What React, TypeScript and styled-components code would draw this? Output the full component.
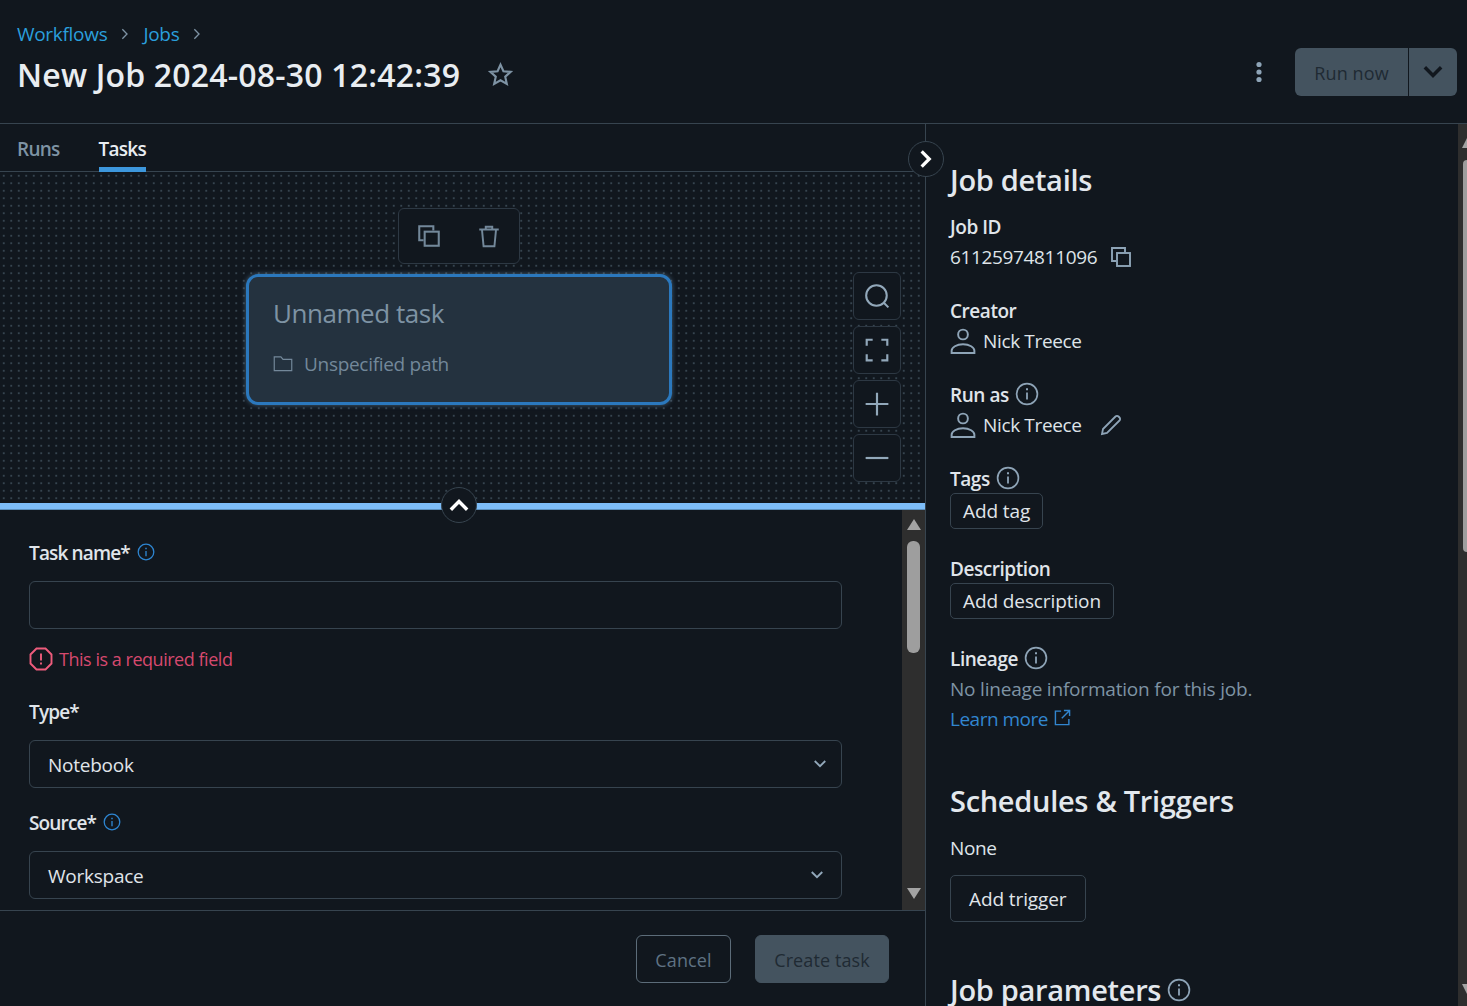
import React from 'react';
import styled, { createGlobalStyle } from 'styled-components';

const GlobalStyle = createGlobalStyle`
  html, body { margin: 0; padding: 0; background: #11171e; }
  body { font-family: "Open Sans", "Noto Sans", "Liberation Sans", sans-serif; color: #e8ecf0; }
  * { box-sizing: border-box; }
`;

const Page = styled.div`
  width: 1467px;
  height: 1006px;
  display: flex;
  flex-direction: column;
  overflow: hidden;
  background: #11171e;
`;

const Header = styled.header`
  height: 124px;
  flex: none;
  display: flex;
  justify-content: space-between;
  padding: 22px 10px 0 17px;
  border-bottom: 1px solid #37444f;
`;

const TitleBlock = styled.div`
  display: flex;
  flex-direction: column;
`;

const Crumbs = styled.nav`
  display: flex;
  align-items: center;
  height: 24px;
  font-size: 19px;
  letter-spacing: -0.3px;
`;

const CrumbLink = styled.span`
  color: #2a9fdc;
`;

const CrumbSep = styled.span`
  width: 36px;
  display: flex;
  justify-content: center;
  color: #7e93a4;
`;

const TitleRow = styled.div`
  display: flex;
  align-items: center;
  margin-top: 5px;
  height: 46px;
`;

const Title = styled.h1`
  margin: 0;
  font-size: 32px;
  font-weight: 600;
  letter-spacing: 0.2px;
  color: #e9edf1;
  white-space: nowrap;
`;

const StarSlot = styled.span`
  margin-left: 27px;
  display: flex;
  color: #7e93a4;
`;

const HeaderActions = styled.div`
  display: flex;
  align-items: center;
  height: 48px;
  margin-top: 26px;
`;

const KebabSlot = styled.span`
  display: flex;
  margin-right: 24px;
  color: #8ea4b7;
`;

const SplitButton = styled.div`
  display: flex;
  width: 162px;
  height: 48px;
  border-radius: 6px;
  background: #44535f;
  overflow: hidden;
`;

const SplitMain = styled.span`
  width: 114px;
  display: flex;
  align-items: center;
  justify-content: center;
  padding-top: 2px;
  font-size: 18px;
  letter-spacing: 0.1px;
  color: #1f2a33;
  border-right: 1px solid #11171e;
`;

const SplitCaret = styled.span`
  flex: 1;
  display: flex;
  align-items: center;
  justify-content: center;
  color: #11171e;
`;

const Body = styled.div`
  flex: 1;
  min-height: 0;
  display: flex;
`;

const LeftPane = styled.section`
  position: relative;
  width: 926px;
  flex: none;
  display: flex;
  flex-direction: column;
  border-right: 1px solid #37444f;
`;

const Tabs = styled.div`
  height: 48px;
  flex: none;
  display: flex;
  gap: 39px;
  padding-left: 17px;
  border-bottom: 1px solid #37444f;
`;

const Tab = styled.div<{ $active?: boolean }>`
  height: 48px;
  padding-top: 12px;
  font-size: 19px;
  font-weight: 600;
  letter-spacing: -0.75px;
  color: ${({ $active }) => ($active ? '#e9edf1' : '#7e93a4')};
  border-bottom: 5px solid ${({ $active }) => ($active ? '#3d97dc' : 'transparent')};
`;

const Canvas = styled.div`
  position: relative;
  height: 331px;
  flex: none;
  background-color: #11171e;
  background-image: radial-gradient(circle at center, #36444f 0.9px, transparent 1.1px);
  background-size: 7.5px 7.5px;
`;

const NodeToolbar = styled.div`
  position: absolute;
  left: 398px;
  top: 36px;
  width: 122px;
  height: 56px;
  display: flex;
  align-items: center;
  justify-content: space-around;
  border: 1px solid #2d3843;
  border-radius: 6px;
  background: #11171e;
  color: #73889a;
`;

const TaskNode = styled.div`
  position: absolute;
  left: 246px;
  top: 102px;
  width: 426px;
  height: 131px;
  padding: 19px 24px;
  border: 3px solid #2b78bd;
  border-radius: 12px;
  background: #24323f;
  box-shadow: 0 0 5px rgba(120, 170, 210, 0.5);
`;

const TaskName = styled.div`
  font-size: 26px;
  line-height: 34px;
  letter-spacing: -0.45px;
  color: #7e93a4;
`;

const TaskPath = styled.div`
  display: flex;
  align-items: center;
  gap: 11px;
  margin-top: 21px;
  font-size: 19px;
  line-height: 26px;
  letter-spacing: -0.3px;
  color: #73889a;
`;

const ZoomControls = styled.div`
  position: absolute;
  left: 853px;
  top: 100px;
  display: flex;
  flex-direction: column;
  gap: 6px;
`;

const ZoomButton = styled.div`
  width: 48px;
  height: 48px;
  display: flex;
  align-items: center;
  justify-content: center;
  border: 1px solid #2d3843;
  border-radius: 6px;
  background: #11171e;
  color: #92a8ba;
`;

const Splitter = styled.div`
  height: 7px;
  flex: none;
  background: #7dbdf8;
  border-bottom: 1px solid #5a8fbd;
`;

const RoundToggle = styled.div<{ $left: number; $top: number }>`
  position: absolute;
  left: ${({ $left }) => $left}px;
  top: ${({ $top }) => $top}px;
  width: 36px;
  height: 36px;
  display: flex;
  align-items: center;
  justify-content: center;
  border: 1px solid #37444f;
  border-radius: 50%;
  background: #11171e;
  color: #fff;
  z-index: 2;
`;

const FormArea = styled.div`
  flex: 1;
  min-height: 0;
  display: flex;
`;

const Form = styled.div`
  flex: 1;
  min-width: 0;
  padding: 30px 60px 0 29px;
  overflow: hidden;
`;

const LabelRow = styled.div`
  display: flex;
  align-items: center;
  gap: 7px;
  height: 26px;
  color: #e0e5ea;
  font-size: 19px;
  font-weight: 600;
  letter-spacing: -0.85px;
`;

const InfoBlue = styled.span`
  display: flex;
  color: #2e86d2;
  margin-top: -3px;
`;

const Input = styled.div`
  height: 48px;
  margin-top: 15px;
  border: 1px solid #37444f;
  border-radius: 6px;
`;

const ErrorRow = styled.div`
  display: flex;
  align-items: center;
  gap: 6px;
  height: 28px;
  margin-top: 16px;
  font-size: 18px;
  letter-spacing: -0.47px;
  color: #d6496e;
`;

const ErrorIcon = styled.span`
  display: flex;
  color: #ee5c7c;
`;

const Select = styled.div<{ $caretInset: number }>`
  height: 48px;
  margin-top: 15px;
  display: flex;
  align-items: center;
  justify-content: space-between;
  padding: 2px ${({ $caretInset }) => $caretInset}px 0 18px;
  border: 1px solid #37444f;
  border-radius: 6px;
  font-size: 19px;
  letter-spacing: -0.25px;
  color: #e0e5ea;
  svg { color: #92a8ba; margin-top: -2px; }
`;

const FieldGap = styled.div<{ $h: number }>`
  height: ${({ $h }) => $h}px;
`;

const Track = styled.div`
  width: 23px;
  flex: none;
  display: flex;
  flex-direction: column;
  align-items: center;
  background: #2e2e2e;
`;

const ArrowSlot = styled.div<{ $h: number }>`
  height: ${({ $h }) => $h}px;
  flex: none;
  display: flex;
  align-items: center;
  justify-content: center;
  color: #a3a3a3;
`;

const Thumb = styled.div`
  width: 13px;
  height: 112px;
  margin-top: 3px;
  border-radius: 6px;
  background: #9e9e9e;
`;

const TrackFill = styled.div`
  flex: 1;
`;

/* the page scrollbar is cut off by the window edge, only its left part shows */
const PageTrack = styled.div`
  width: 9px;
  flex: none;
  display: flex;
  flex-direction: column;
  padding: 14px 0 12px 4px;
  background: #2e2e2e;
  color: #a3a3a3;
  svg { flex: none; }
`;

const PageThumb = styled.div`
  width: 4px;
  height: 392px;
  margin: 12px 0 0 1px;
  border-radius: 5px 0 0 5px;
  background: #9e9e9e;
`;

const Footer = styled.div`
  height: 96px;
  flex: none;
  display: flex;
  justify-content: flex-end;
  gap: 24px;
  padding: 24px 36px 0 0;
  border-top: 1px solid #37444f;
`;

const FooterButton = styled.div<{ $primary?: boolean; $width: number }>`
  width: ${({ $width }) => $width}px;
  height: 48px;
  display: flex;
  align-items: center;
  justify-content: center;
  padding-top: 2px;
  border-radius: 6px;
  font-size: 18px;
  letter-spacing: 0.1px;
  border: 1px solid ${({ $primary }) => ($primary ? '#44535f' : '#5c6c79')};
  background: ${({ $primary }) => ($primary ? '#44535f' : 'transparent')};
  color: ${({ $primary }) => ($primary ? '#1f2a33' : '#5f7283')};
`;

const RightPane = styled.aside`
  flex: 1;
  min-width: 0;
  display: flex;
`;

const Details = styled.div`
  flex: 1;
  min-width: 0;
  padding: 36px 0 0 24px;
  overflow: hidden;
`;

const SectionTitle = styled.h2<{ $top?: number }>`
  display: flex;
  align-items: center;
  gap: 6px;
  margin: ${({ $top }) => $top ?? 0}px 0 0;
  font-size: 29px;
  line-height: 40px;
  font-weight: 600;
  letter-spacing: -0.3px;
  color: #e3e8ed;
  white-space: nowrap;
`;

const InfoGrey = styled.span<{ $shift?: number }>`
  display: flex;
  color: #8ea4b7;
  margin-top: ${({ $shift }) => $shift ?? 0}px;
`;

const DetailLabel = styled.div<{ $top?: number }>`
  display: flex;
  align-items: center;
  gap: 6px;
  height: 26px;
  margin-top: ${({ $top }) => $top ?? 0}px;
  font-size: 19px;
  font-weight: 600;
  letter-spacing: -0.45px;
  color: #e0e5ea;
`;

const DetailValue = styled.div`
  display: flex;
  align-items: center;
  height: 30px;
  margin-top: 2px;
  font-size: 19px;
  letter-spacing: -0.35px;
  color: #dfe4e9;
`;

const IconSlot = styled.span<{ $left?: number; $right?: number }>`
  display: flex;
  color: #8ea4b7;
  margin-left: ${({ $left }) => $left ?? 0}px;
  margin-right: ${({ $right }) => $right ?? 0}px;
`;

const GhostButton = styled.div<{ $tall?: boolean }>`
  display: inline-flex;
  align-items: center;
  height: ${({ $tall }) => ($tall ? 47 : 36)}px;
  padding: 0 ${({ $tall }) => ($tall ? 18 : 12)}px;
  border: 1px solid #37444f;
  border-radius: 5px;
  font-size: 19px;
  letter-spacing: -0.1px;
  color: #e0e5ea;
`;

const MutedLine = styled.div`
  height: 30px;
  margin-top: 2px;
  display: flex;
  align-items: center;
  font-size: 19px;
  letter-spacing: -0.2px;
  color: #7e93a4;
`;

const LearnLine = styled.div`
  height: 30px;
  display: flex;
  align-items: center;
  gap: 6px;
  font-size: 19px;
  letter-spacing: -0.5px;
  color: #3286d0;
  svg { margin-top: -4px; }
`;

const ButtonRow = styled.div`
  margin-top: 1px;
`;

const Icon = ({ size, children, sw = 1.5 }: { size: number; children: React.ReactNode; sw?: number }) => (
  <svg width={size} height={size} viewBox="0 0 24 24" fill="none" stroke="currentColor" strokeWidth={sw}>
    {children}
  </svg>
);

const Info = ({ size }: { size: number }) => (
  <Icon size={size} sw={1.7}>
    <circle cx="12" cy="12" r="10.4" />
    <path d="M12 10.5v7" strokeWidth="1.8" />
    <path d="M12 6.200v2" strokeWidth="2" />
  </Icon>
);

const Copy = ({ size }: { size: number }) => (
  <Icon size={size} sw={1.9}>
    <path d="M7 16H3V3h13v4" />
    <rect x="8" y="8" width="13" height="13" />
  </Icon>
);

const Person = () => (
  <Icon size={26} sw={1.8}>
    <circle cx="12" cy="6" r="4.500" />
    <path d="M1.500 23v-2c0-3 4.500-6 10.500-6s10.500 3 10.500 6v2z" />
  </Icon>
);

const Chevron = ({ size, dir, sw = 3 }: { size: number; dir: 'up' | 'down' | 'right'; sw?: number }) => {
  const d = dir === 'up' ? 'M5 16l7-7 7 7' : dir === 'down' ? 'M5 8l7 7 7-7' : 'M8 5l7 7-7 7';
  return (
    <Icon size={size} sw={sw}>
      <path d={d} />
    </Icon>
  );
};

export default function App() {
  return (
    <Page>
      <GlobalStyle />
      <Header>
        <TitleBlock>
          <Crumbs>
            <CrumbLink>Workflows</CrumbLink>
            <CrumbSep><Chevron size={16} dir="right" sw={2} /></CrumbSep>
            <CrumbLink>Jobs</CrumbLink>
            <CrumbSep><Chevron size={16} dir="right" sw={2} /></CrumbSep>
          </Crumbs>
          <TitleRow>
            <Title>New Job 2024-08-30 12:42:39</Title>
            <StarSlot>
              <Icon size={27} sw={1.9}>
                <path d="M12 3.200l2.600 5.900 6.400.6-4.800 4.300 1.400 6.300L12 17.100l-5.600 3.200 1.400-6.300L3 9.700l6.400-.6z" />
              </Icon>
            </StarSlot>
          </TitleRow>
        </TitleBlock>
        <HeaderActions>
          <KebabSlot>
            <svg width="24" height="24" viewBox="0 0 24 24" fill="currentColor">
              <circle cx="12" cy="4.500" r="2.600" />
              <circle cx="12" cy="12" r="2.600" />
              <circle cx="12" cy="19.500" r="2.600" />
            </svg>
          </KebabSlot>
          <SplitButton>
            <SplitMain>Run now</SplitMain>
            <SplitCaret><Chevron size={28} dir="down" /></SplitCaret>
          </SplitButton>
        </HeaderActions>
      </Header>
      <Body>
        <LeftPane>
          <RoundToggle $left={908} $top={17}><Chevron size={26} dir="right" /></RoundToggle>
          <RoundToggle $left={441} $top={363}><Chevron size={28} dir="up" /></RoundToggle>
          <Tabs>
            <Tab>Runs</Tab>
            <Tab $active>Tasks</Tab>
          </Tabs>
          <Canvas>
            <NodeToolbar>
              <Copy size={26} />
              <Icon size={26} sw={1.8}>
                <path d="M3 6h18M9 6V3.500h6V6M5.500 6l1.500 15.500h10L18.500 6" />
              </Icon>
            </NodeToolbar>
            <TaskNode>
              <TaskName>Unnamed task</TaskName>
              <TaskPath>
                <Icon size={20} sw={1.4}>
                  <path d="M1.500 20V3.500h8l2.500 3h10.500V20z" />
                </Icon>
                Unspecified path
              </TaskPath>
            </TaskNode>
            <ZoomControls>
              <ZoomButton>
                <Icon size={26} sw={1.9}>
                  <circle cx="11.500" cy="11.500" r="9.500" />
                  <path d="M18.500 18.500l4 4" />
                </Icon>
              </ZoomButton>
              <ZoomButton>
                <Icon size={26} sw={2}>
                  <path d="M2.500 8V2.500H8M16 2.500h5.500V8M2.500 16v5.500H8M16 21.500h5.500V16" />
                </Icon>
              </ZoomButton>
              <ZoomButton>
                <Icon size={26} sw={2}>
                  <path d="M12 1.500v21M1.500 12h21" />
                </Icon>
              </ZoomButton>
              <ZoomButton>
                <Icon size={26} sw={2}>
                  <path d="M1.500 12h21" />
                </Icon>
              </ZoomButton>
            </ZoomControls>
          </Canvas>
          <Splitter />
          <FormArea>
            <Form>
              <LabelRow>
                Task name*
                <InfoBlue><Info size={18} /></InfoBlue>
              </LabelRow>
              <Input />
              <ErrorRow>
                <ErrorIcon>
                  <Icon size={24} sw={1.9}>
                    <path d="M7.500 1.500h9l6 6v9l-6 6h-9l-6-6v-9z" />
                    <path d="M12 6.500v7M12 15.500v2" />
                  </Icon>
                </ErrorIcon>
                This is a required field
              </ErrorRow>
              <FieldGap $h={26} />
              <LabelRow>Type*</LabelRow>
              <Select $caretInset={12}>
                Notebook
                <Chevron size={18} dir="down" sw={2.5} />
              </Select>
              <FieldGap $h={22} />
              <LabelRow>
                Source*
                <InfoBlue><Info size={18} /></InfoBlue>
              </LabelRow>
              <Select $caretInset={15}>
                Workspace
                <Chevron size={18} dir="down" sw={2.5} />
              </Select>
            </Form>
            <Track>
              <ArrowSlot $h={28}>
                <svg width="14" height="11" viewBox="0 0 14 11" fill="currentColor"><path d="M7 0l7 11H0z" /></svg>
              </ArrowSlot>
              <Thumb />
              <TrackFill />
              <ArrowSlot $h={34}>
                <svg width="14" height="11" viewBox="0 0 14 11" fill="currentColor"><path d="M7 11l7-11H0z" /></svg>
              </ArrowSlot>
            </Track>
          </FormArea>
          <Footer>
            <FooterButton $width={95}>Cancel</FooterButton>
            <FooterButton $width={134} $primary>Create task</FooterButton>
          </Footer>
        </LeftPane>
        <RightPane>
          <Details>
            <SectionTitle>Job details</SectionTitle>
            <DetailLabel $top={14}>Job ID</DetailLabel>
            <DetailValue>
              61125974811096
              <IconSlot $left={12}><Copy size={24} /></IconSlot>
            </DetailValue>
            <DetailLabel $top={26}>Creator</DetailLabel>
            <DetailValue>
              <IconSlot $right={7}><Person /></IconSlot>
              Nick Treece
            </DetailValue>
            <DetailLabel $top={26}>
              Run as
              <InfoGrey $shift={-2}><Info size={24} /></InfoGrey>
            </DetailLabel>
            <DetailValue>
              <IconSlot $right={7}><Person /></IconSlot>
              Nick Treece
              <IconSlot $left={17}>
                <Icon size={24} sw={1.8}>
                  <path d="M3 21l1-5L16.500 3.500a2.100 2.100 0 0 1 3 0l1 1a2.100 2.100 0 0 1 0 3L8 20z" />
                </Icon>
              </IconSlot>
            </DetailValue>
            <DetailLabel $top={26}>
              Tags
              <InfoGrey $shift={-2}><Info size={24} /></InfoGrey>
            </DetailLabel>
            <ButtonRow><GhostButton>Add tag</GhostButton></ButtonRow>
            <DetailLabel $top={27}>Description</DetailLabel>
            <ButtonRow><GhostButton>Add description</GhostButton></ButtonRow>
            <DetailLabel $top={27}>
              Lineage
              <InfoGrey $shift={-2}><Info size={24} /></InfoGrey>
            </DetailLabel>
            <MutedLine>No lineage information for this job.</MutedLine>
            <LearnLine>
              Learn more
              <Icon size={17} sw={2}>
                <path d="M10 3H2v19h19v-8M14 2h8v8M22 2L11 13" />
              </Icon>
            </LearnLine>
            <SectionTitle $top={47}>Schedules &amp; Triggers</SectionTitle>
            <FieldGap $h={10} />
            <DetailValue>None</DetailValue>
            <ButtonRow><FieldGap $h={11} /><GhostButton $tall>Add trigger</GhostButton></ButtonRow>
            <SectionTitle $top={48}>
              Job parameters
              <InfoGrey><Info size={24} /></InfoGrey>
            </SectionTitle>
          </Details>
          <PageTrack>
            <svg width="5" height="10" viewBox="0 0 5 10" fill="currentColor"><path d="M5 0v10H0z" /></svg>
            <PageThumb />
            <TrackFill />
            <svg width="5" height="10" viewBox="0 0 5 10" fill="currentColor"><path d="M5 10V0H0z" /></svg>
          </PageTrack>
        </RightPane>
      </Body>
    </Page>
  );
}
